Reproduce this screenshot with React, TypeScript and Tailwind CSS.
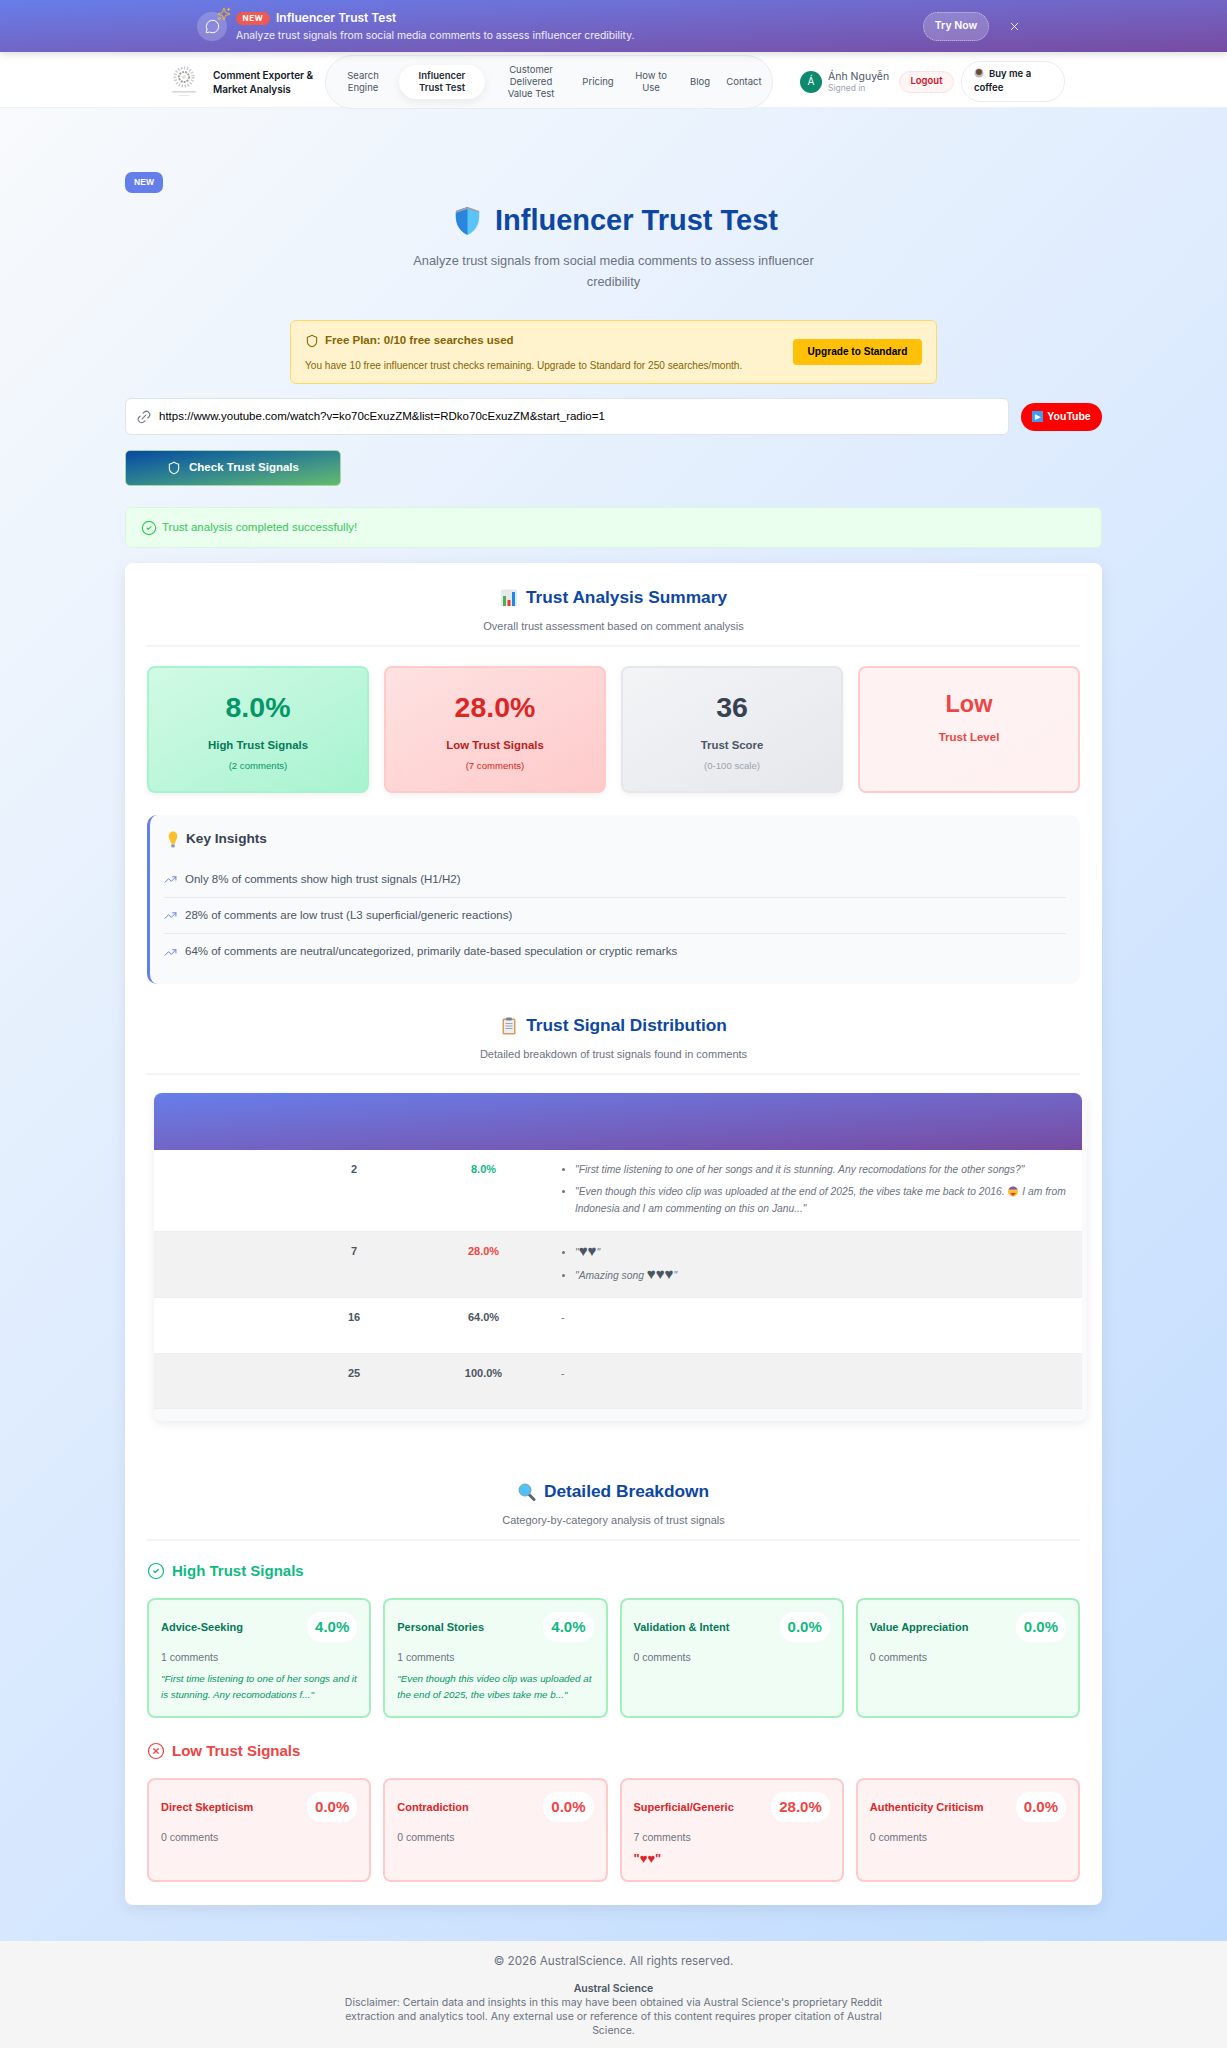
import { CircleCheck, CircleX, Link2, MessageCircle, Shield, Sparkles, TrendingUp, X } from "lucide-react";

const ShieldEmoji = () => (
    <svg width="27" height="30" viewBox="0 0 27 30">
        <path d="M13.5 1 L25 5 C26 15 24 24 13.5 29 C3 24 1 15 2 5 Z" fill="#5ac4f8" />
        <path d="M13.5 1 L2 5 C1 15 3 24 13.5 29 Z" fill="#2a86dc" />
        <path d="M13.5 1 L25 5 L25.4 7 L13.5 3 L1.8 7 L2 5 Z" fill="#9aa5b1" />
    </svg>
);

const ChartEmoji = () => (
    <svg width="18" height="18" viewBox="0 0 18 18">
        <rect x="1" y="0.5" width="16" height="17" rx="1" fill="#e6e9ec" />
        <rect x="3" y="7" width="3" height="10" fill="#4caf50" />
        <rect x="7.5" y="11" width="3" height="6" fill="#e53935" />
        <rect x="12" y="3" width="3" height="14" fill="#1e88e5" />
    </svg>
);

const ClipboardEmoji = () => (
    <svg width="18" height="18" viewBox="0 0 18 18">
        <rect x="2.5" y="1.5" width="13" height="16" rx="1.5" fill="#d99a5b" />
        <rect x="4" y="3" width="10" height="13" fill="#eceff1" />
        <rect x="6" y="0.5" width="6" height="3" rx="1" fill="#78848c" />
        <path d="M5.5 6.5h7M5.5 9h7M5.5 11.5h7" stroke="#9aa5ad" strokeWidth="1" />
    </svg>
);

const BulbEmoji = () => (
    <svg width="12" height="17" viewBox="0 0 14 16" preserveAspectRatio="none">
        <path d="M7 0.5 C10.5 0.5 12 3 12 5.2 C12 7.6 9.8 9 9.4 12 L4.6 12 C4.2 9 2 7.6 2 5.2 C2 3 3.5 0.5 7 0.5 Z" fill="#fbc02d" />
        <rect x="5" y="12.5" width="4" height="3" rx="1" fill="#8d99a3" />
    </svg>
);

const SearchEmoji = () => (
    <svg width="18" height="18" viewBox="0 0 18 18">
        <path d="M10.5 11 L16 16.5" stroke="#596673" strokeWidth="3" strokeLinecap="round" />
        <circle cx="7" cy="7" r="6" fill="#4fc3f7" stroke="#8b98a3" strokeWidth="1" />
    </svg>
);

const FaceEmoji = () => (
    <svg width="12" height="12" viewBox="0 0 12 12" className="inline-block align-[-2px]">
        <circle cx="6" cy="6.5" r="5" fill="#fbc02d" />
        <path d="M1.5 4.5 C3 0.5 9 0.5 10.5 4.5 Z" fill="#7e57c2" />
        <path d="M3 8h6l-3 3z" fill="#e53935" />
    </svg>
);

const CoffeeEmoji = () => (
    <svg width="10" height="10" viewBox="0 0 10 10" className="mr-[5px] inline-block align-[-1px]">
        <circle cx="5" cy="5" r="4.5" fill="#b8bcc2" />
        <circle cx="5" cy="4" r="3" fill="#6d4c33" />
    </svg>
);

const Logo = () => (
    <svg width="28" height="32" viewBox="0 0 28 32">
        <circle cx="14" cy="11" r="9" fill="none" stroke="#c9cdd2" strokeWidth="3" strokeDasharray="1.5 1.5" />
        <circle cx="14" cy="11" r="5" fill="none" stroke="#a9a39a" strokeWidth="2" strokeDasharray="2 1" />
        <circle cx="14" cy="11" r="1.8" fill="#d9dbde" />
        <rect x="2" y="25" width="24" height="1.6" fill="#d5d7da" />
        <rect x="9" y="29" width="10" height="1" fill="#e3e4e6" />
    </svg>
);

const SectionHeader = ({ icon, title, subtitle }: { icon: React.ReactNode; title: string; subtitle: string }) => (
    <div className="border-b-2 border-[#f1f3f5] pb-[12px] text-center">
        <h2 className="flex h-[26px] items-center justify-center gap-[8px] text-[17.3px] font-bold text-[#0d47a1]">
            {icon}
            {title}
        </h2>
        <p className="mt-[8px] text-[11px] leading-[14px] text-[#6b7280]">{subtitle}</p>
    </div>
);

const navItems = [
    { label: "Search\nEngine", className: "w-[72px]" },
    { label: "Influencer\nTrust Test", className: "w-[86px] h-[34px] bg-white rounded-[17px] shadow-[0_3px_8px_rgba(0,0,0,0.07)] font-semibold text-[#1f2937]" },
    { label: "Customer\nDelivered\nValue Test", className: "w-[92px]" },
    { label: "Pricing", className: "w-[42px]" },
    { label: "How to\nUse", className: "w-[64px]" },
    { label: "Blog", className: "w-[34px]" },
    { label: "Contact", className: "w-[54px]" },
];

const stats = [
    { value: "8.0%", label: "High Trust Signals", note: "(2 comments)", box: "border-[#a7f3d0] bg-gradient-to-br from-[#d1fae5] to-[#a7f3d0]", valueColor: "text-[#059669]", labelColor: "text-[#047857]", noteColor: "text-[#059669]" },
    { value: "28.0%", label: "Low Trust Signals", note: "(7 comments)", box: "border-[#fecaca] bg-gradient-to-br from-[#fee2e2] to-[#fecaca]", valueColor: "text-[#dc2626]", labelColor: "text-[#b91c1c]", noteColor: "text-[#dc2626]" },
    { value: "36", label: "Trust Score", note: "(0-100 scale)", box: "border-[#e5e7eb] bg-gradient-to-br from-[#f3f4f6] to-[#e5e7eb]", valueColor: "text-[#374151]", labelColor: "text-[#4b5563]", noteColor: "text-[#9ca3af]" },
];

const insights = [
    "Only 8% of comments show high trust signals (H1/H2)",
    "28% of comments are low trust (L3 superficial/generic reactions)",
    "64% of comments are neutral/uncategorized, primarily date-based speculation or cryptic remarks",
];

const highCards = [
    { name: "Advice-Seeking", pct: "4.0%", count: "1 comments", quote: "\"First time listening to one of her songs and it is stunning. Any recomodations f...\"" },
    { name: "Personal Stories", pct: "4.0%", count: "1 comments", quote: "\"Even though this video clip was uploaded at the end of 2025, the vibes take me b...\"" },
    { name: "Validation & Intent", pct: "0.0%", count: "0 comments", quote: "" },
    { name: "Value Appreciation", pct: "0.0%", count: "0 comments", quote: "" },
];

const lowCards = [
    { name: "Direct Skepticism", pct: "0.0%", count: "0 comments", quote: "" },
    { name: "Contradiction", pct: "0.0%", count: "0 comments", quote: "" },
    { name: "Superficial/Generic", pct: "28.0%", count: "7 comments", quote: "\"♥♥\"" },
    { name: "Authenticity Criticism", pct: "0.0%", count: "0 comments", quote: "" },
];

const SignalCard = ({ card, low }: { card: typeof highCards[number]; low?: boolean }) => (
    <div className={`rounded-[8px] border-2 p-[12px] ${low ? "h-[104px] border-[#fecaca] bg-[#fef2f2]" : "h-[120px] border-[#a3f0bd] bg-[#f0fdf4]"}`}>
        <div className="flex h-[30px] items-center justify-between">
            <span className={`text-[11px] font-bold ${low ? "text-[#dc2626]" : "text-[#047857]"}`}>{card.name}</span>
            <span className={`flex h-[30px] items-center rounded-[14px] bg-white px-[8px] text-[15px] font-bold ${low ? "text-[#ef4444]" : "text-[#10b981]"}`}>{card.pct}</span>
        </div>
        <p className="mt-[8px] text-[10.5px] leading-[14px] text-[#6b7280]">{card.count}</p>
        {card.quote && (
            <p className={`mt-[7px] leading-[16px] ${low ? "text-[13px] font-bold text-[#dc2626]" : "text-[9.8px] italic text-[#059669]"}`}>{card.quote}</p>
        )}
    </div>
);

const TableRow = ({ count, pct, pctColor, bg, height, children }: { count: string; pct: string; pctColor: string; bg: string; height: string; children: React.ReactNode }) => (
    <div className={`grid grid-cols-[136px_128px_131px_1fr] border-b border-[#eceef0] pt-[11px] text-[11px] leading-[17px] ${bg} ${height}`}>
        <div />
        <div className="text-center font-bold text-[#4b5563]">{count}</div>
        <div className={`text-center font-bold ${pctColor}`}>{pct}</div>
        <div className="pl-[12px] pr-[6px] text-[10.3px] text-[#6b7280]">{children}</div>
    </div>
);

const App = () => {
    return (
        <div className="w-[1227px] font-['Liberation_Sans',sans-serif]">
            {/* Top promo banner */}
            <div className="relative z-20 flex h-[52px] items-center bg-gradient-to-br from-[#667eea] to-[#764ba2] pl-[197px] font-['Inter',sans-serif] text-white shadow-[0_2px_8px_rgba(0,0,0,0.15)]">
                <div className="relative flex h-[29px] w-[30px] items-center justify-center rounded-full bg-white/20">
                    <MessageCircle size={15} strokeWidth={1.6} />
                    <Sparkles size={14} strokeWidth={1.6} className="absolute -right-[4px] -top-[5px] text-[#fbbf24]" />
                </div>
                <div className="ml-[9px] w-[687px]">
                    <div className="flex h-[16px] items-center">
                        <span className="flex h-[13px] w-[34px] items-center justify-center rounded-full bg-[#ee5a52] text-[8px] font-bold tracking-[0.5px]">NEW</span>
                        <span className="ml-[6px] text-[12px] font-semibold">Influencer Trust Test</span>
                    </div>
                    <p className="mt-[2px] text-[10.33px] leading-[14px] text-white/90">Analyze trust signals from social media comments to assess influencer credibility.</p>
                </div>
                <button className="flex h-[29px] w-[66px] items-center justify-center rounded-full border border-dotted border-white/50 bg-white/20 text-[10.5px] font-semibold">Try Now</button>
                <X size={13} strokeWidth={1.6} className="ml-[19px]" />
            </div>

            {/* Navbar */}
            <nav className="flex h-[56px] items-center border-b border-[#eef2f7] bg-white pl-[170px] pt-[4px] font-['Inter',sans-serif]">
                <Logo />
                <div className="ml-[15px] w-[112px] text-[10px] font-semibold leading-[14px] text-[#111827]">Comment Exporter &amp; Market Analysis</div>
                <div className="relative z-10 flex h-[54px] w-[448px] shrink-0 items-center rounded-[30px] border border-[#e9edf2] bg-[#f8fafc] pl-[1px] text-[9.5px] leading-[12px] text-[#4b5563]">
                    {navItems.map((item) => (
                        <div key={item.label} className={`flex shrink-0 items-center justify-center whitespace-pre-line text-center ${item.className}`}>
                            {item.label}
                        </div>
                    ))}
                </div>
                <div className="ml-[27px] flex h-[22px] w-[22px] items-center justify-center rounded-full bg-[#0d8a6e] text-[10px] text-white">Á</div>
                <div className="ml-[6px] w-[71px]">
                    <div className="text-[10.5px] leading-[12px] text-[#4b5563]">Ánh Nguyễn</div>
                    <div className="text-[8.5px] leading-[10px] text-[#9ca3af]">Signed in</div>
                </div>
                <div className="flex h-[22px] w-[55px] items-center justify-center rounded-full border border-[#fee2e2] bg-[#fff5f5] text-[9.5px] font-semibold text-[#d0101f]">Logout</div>
                <div className="ml-[7px] h-[41px] w-[104px] rounded-[20px] border border-[#e9edf2] bg-white px-[12px] py-[5px] text-[9.5px] font-semibold leading-[14px] text-[#111827]">
                    <CoffeeEmoji />
                    Buy me a coffee
                </div>
            </nav>

            {/* Main area */}
            <main className="bg-[linear-gradient(135deg,#f8fafc_0%,#dbeafe_50%,#bfdbfe_100%)] pb-[36px] pt-[64px]">
                <div className="mx-auto w-[977px]">
                    <span className="flex h-[21px] w-[38px] items-center justify-center rounded-[7px] bg-[#667eea] text-[8.5px] font-bold text-white">NEW</span>

                    <h1 className="ml-[5px] mt-[10px] flex h-[36px] items-center justify-center gap-[14px] text-[29px] font-bold text-[#0d47a1]">
                        <ShieldEmoji />
                        Influencer Trust Test
                    </h1>
                    <p className="mx-auto mt-[12px] w-[420px] text-center text-[12.8px] leading-[20.5px] text-[#6b7280]">
                        Analyze trust signals from social media comments to assess influencer credibility
                    </p>

                    {/* Free plan notice */}
                    <div className="mx-auto mt-[28px] flex h-[64px] w-[647px] items-center justify-between rounded-[6px] border border-[#ffd966] bg-[#fff3cd] pl-[14px] pr-[14px]">
                        <div>
                            <div className="flex items-center gap-[6px] text-[11.5px] font-bold text-[#856404]">
                                <Shield size={14} strokeWidth={1.8} />
                                Free Plan: 0/10 free searches used
                            </div>
                            <p className="mt-[9px] text-[10.1px] leading-[13px] text-[#856404]">You have 10 free influencer trust checks remaining. Upgrade to Standard for 250 searches/month.</p>
                        </div>
                        <button className="flex h-[26px] w-[129px] items-center justify-center rounded-[4px] bg-[#ffc107] text-[10.1px] font-bold text-black">Upgrade to Standard</button>
                    </div>

                    {/* URL input */}
                    <div className="mt-[14px] flex items-center gap-[12px]">
                        <div className="flex h-[37px] w-[885px] items-center gap-[7px] rounded-[6px] border border-[#dfe3ea] bg-white pl-[10px] text-[11.5px] text-black">
                            <Link2 size={16} strokeWidth={1.6} className="-rotate-45 text-[#6b7280]" />
                            https://www.youtube.com/watch?v=ko70cExuzZM&amp;list=RDko70cExuzZM&amp;start_radio=1
                        </div>
                        <div className="flex h-[28px] w-[81px] items-center justify-center gap-[4px] rounded-full bg-[#ff0000] text-[10.5px] font-bold text-white">
                            <span className="flex h-[11px] w-[11px] items-center justify-center bg-[#3b9cf0] text-[7px] leading-none">▶</span>
                            YouTube
                        </div>
                    </div>

                    <button className="mt-[15px] flex h-[36px] w-[216px] items-center justify-center gap-[8px] rounded-[5px] border border-[#a5d6a7] bg-gradient-to-br from-[#0d47a1] to-[#66bb6a] text-[11.5px] font-bold text-white">
                        <Shield size={14} strokeWidth={1.8} />
                        Check Trust Signals
                    </button>

                    <div className="mt-[21px] flex h-[41px] items-center gap-[5px] rounded-[6px] border border-[#d9f7df] bg-[#ebffee] pl-[15px] text-[11.5px] text-[#34c759]">
                        <CircleCheck size={16} strokeWidth={1.7} />
                        Trust analysis completed successfully!
                    </div>

                    {/* Results card */}
                    <div className="mt-[15px] rounded-[8px] bg-white px-[22px] pb-[23px] pt-[22px] shadow-[0_4px_16px_rgba(0,0,0,0.08)]">
                        <SectionHeader icon={<ChartEmoji />} title="Trust Analysis Summary" subtitle="Overall trust assessment based on comment analysis" />

                        <div className="mt-[19px] grid grid-cols-4 gap-[15px]">
                            {stats.map((s) => (
                                <div key={s.label} className={`h-[127px] rounded-[8px] border-2 pt-[21px] text-center shadow-[0_2px_6px_rgba(0,0,0,0.06)] ${s.box}`}>
                                    <div className={`text-[28.5px] font-bold leading-[36px] ${s.valueColor}`}>{s.value}</div>
                                    <div className={`mt-[12px] text-[11.4px] font-bold leading-[16px] ${s.labelColor}`}>{s.label}</div>
                                    <div className={`mt-[6px] text-[9.6px] leading-[14px] ${s.noteColor}`}>{s.note}</div>
                                </div>
                            ))}
                            <div className="h-[127px] rounded-[8px] border-2 border-[#fecaca] bg-gradient-to-br from-[#fef2f2] to-[#fff1f2] pt-[21px] text-center">
                                <div className="text-[23.5px] font-bold leading-[30px] text-[#ef4444]">Low</div>
                                <div className="mt-[10px] text-[11.5px] font-bold leading-[16px] text-[#ef4444]">Trust Level</div>
                            </div>
                        </div>

                        {/* Key insights */}
                        <div className="mt-[22px] h-[169px] rounded-[10px] border-l-[3px] border-[#667eea] bg-[#f8fafc] pl-[14px] pr-[14px] pt-[14px]">
                            <h3 className="ml-[3px] flex h-[20px] items-center gap-[7px] text-[13.6px] font-bold text-[#374151]">
                                <BulbEmoji />
                                Key Insights
                            </h3>
                            <ul className="mt-[13px] text-[11.5px] text-[#4b5563]">
                                {insights.map((text, i) => (
                                    <li key={text} className={`flex h-[36px] items-center gap-[8px] ${i < 2 ? "border-b border-[#e9ecef]" : ""}`}>
                                        <TrendingUp size={13} strokeWidth={1.8} className="text-[#667eea]" />
                                        {text}
                                    </li>
                                ))}
                            </ul>
                        </div>

                        {/* Distribution */}
                        <div className="mt-[29px]">
                            <SectionHeader icon={<ClipboardEmoji />} title="Trust Signal Distribution" subtitle="Detailed breakdown of trust signals found in comments" />
                        </div>
                        <div className="-mr-[7px] ml-[7px] mt-[18px] h-[328px] rounded-[8px] bg-[#f8fafc] pr-[5px] shadow-[0_3px_10px_rgba(0,0,0,0.08)]">
                            <div className="h-[57px] rounded-t-[8px] bg-gradient-to-br from-[#667eea] to-[#764ba2]" />
                            <TableRow count="2" pct="8.0%" pctColor="text-[#10b981]" bg="bg-white" height="h-[82px]">
                                <ul className="list-disc pl-[14px] italic">
                                    <li className="mb-[5px]">"First time listening to one of her songs and it is stunning. Any recomodations for the other songs?"</li>
                                    <li>"Even though this video clip was uploaded at the end of 2025, the vibes take me back to 2016. <FaceEmoji /> I am from Indonesia and I am commenting on this on Janu..."</li>
                                </ul>
                            </TableRow>
                            <TableRow count="7" pct="28.0%" pctColor="text-[#ef4444]" bg="bg-[#f2f2f2]" height="h-[66px]">
                                <ul className="list-disc pl-[14px] italic">
                                    <li className="mb-[5px]">"<span className="text-[15px] leading-none not-italic text-[#4b5563]">♥♥</span>"</li>
                                    <li>"Amazing song <span className="text-[15px] leading-none not-italic text-[#4b5563]">♥♥♥</span>"</li>
                                </ul>
                            </TableRow>
                            <TableRow count="16" pct="64.0%" pctColor="text-[#4b5563]" bg="bg-white" height="h-[56px]">
                                -
                            </TableRow>
                            <TableRow count="25" pct="100.0%" pctColor="text-[#4b5563]" bg="bg-[#f2f2f2]" height="h-[55px]">
                                -
                            </TableRow>
                        </div>

                        {/* Breakdown */}
                        <div className="mt-[58px]">
                            <SectionHeader icon={<SearchEmoji />} title="Detailed Breakdown" subtitle="Category-by-category analysis of trust signals" />
                        </div>
                        <h3 className="mt-[20px] flex h-[20px] items-center gap-[7px] text-[15px] font-bold text-[#10b981]">
                            <CircleCheck size={18} strokeWidth={1.6} />
                            High Trust Signals
                        </h3>
                        <div className="mt-[17px] grid grid-cols-4 gap-[12px]">
                            {highCards.map((c) => <SignalCard key={c.name} card={c} />)}
                        </div>
                        <h3 className="mt-[23px] flex h-[20px] items-center gap-[7px] text-[15px] font-bold text-[#ef4444]">
                            <CircleX size={18} strokeWidth={1.6} />
                            Low Trust Signals
                        </h3>
                        <div className="mt-[17px] grid grid-cols-4 gap-[12px]">
                            {lowCards.map((c) => <SignalCard key={c.name} card={c} low />)}
                        </div>
                    </div>
                </div>
            </main>

            {/* Footer */}
            <footer className="h-[107px] bg-[#f5f5f5] pt-[13px] text-center font-['Inter',sans-serif] text-[#6b7280]">
                <p className="text-[11.7px] leading-[14px]">© 2026 AustralScience. All rights reserved.</p>
                <div className="mx-auto mt-[14px] w-[540px] text-[10.5px] leading-[14px]">
                    <div className="font-semibold text-[#4b5563]">Austral Science</div>
                    Disclaimer: Certain data and insights in this may have been obtained via Austral Science's proprietary Reddit extraction and analytics tool. Any external use or reference of this content requires proper citation of Austral Science.
                </div>
            </footer>
        </div>
    );
};

export default App;
